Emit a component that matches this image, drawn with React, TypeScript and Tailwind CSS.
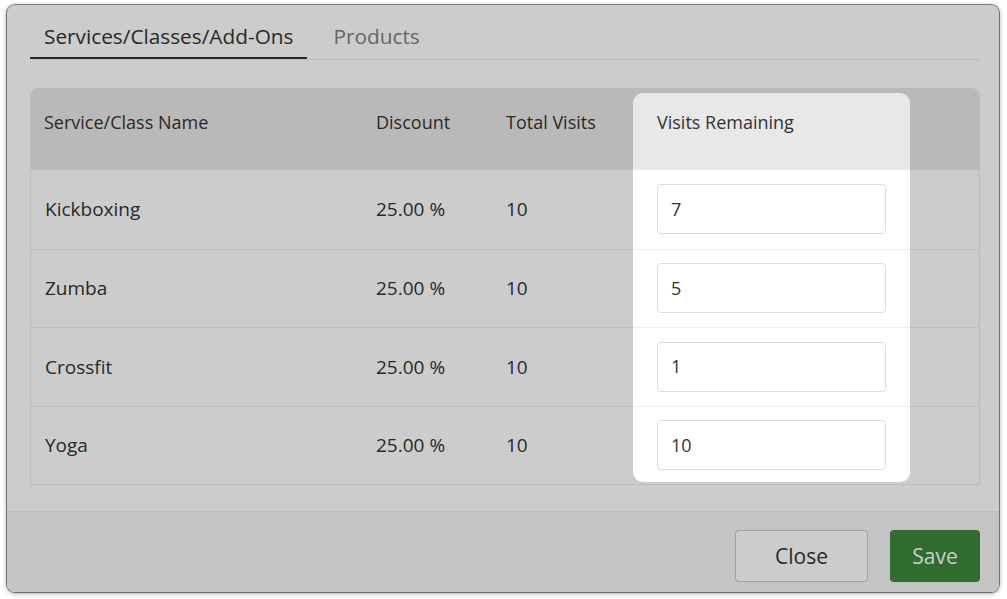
import React from "react";

const rows = [
  { name: "Kickboxing", discount: "25.00 %", total: "10", remaining: "7" },
  { name: "Zumba", discount: "25.00 %", total: "10", remaining: "5" },
  { name: "Crossfit", discount: "25.00 %", total: "10", remaining: "1" },
  { name: "Yoga", discount: "25.00 %", total: "10", remaining: "10" },
];

const cols = "grid grid-cols-[331px_130px_141px_277px_70px]";

export default function App() {
  return (
    <div
      className="w-[1007px] h-[599px] bg-white pt-[5px] pl-[7px]"
      style={{ fontFamily: "'Open Sans', Lato, sans-serif", fontVariantLigatures: "none" }}
    >
      <div className="relative w-[992px] h-[587px] bg-white rounded-[8px] overflow-hidden shadow-[0_0_0_1px_rgba(0,0,0,0.45),0_1px_5px_rgba(0,0,0,0.45)] flex flex-col">
        {/* Tabs */}
        <div className="pl-[23px] pr-[19px] pt-[19px]">
          <div className="flex border-b border-[#ececec]">
            <div className="px-[14px] pb-[9px] border-b-2 border-[#333] text-[20.8px] leading-[24px] text-[#333]">
              Services/Classes/Add-Ons
            </div>
            <div className="ml-[12px] px-[14px] pb-[9px] text-[20.8px] leading-[24px] text-[#808080]">
              Products
            </div>
          </div>
        </div>

        {/* Table */}
        <div className="pl-[23px] pr-[19px] pt-[28px]">
          <div className="relative w-[950px] rounded-t-[8px] border border-[#ececec] border-t-0">
            <div className={`${cols} h-[82px] bg-[#e8e8e8] rounded-t-[8px] text-[18px] text-[#333]`}>
              <div className="pl-[13px] pt-[21px]">Service/Class Name</div>
              <div className="pl-[14px] pt-[21px]">Discount</div>
              <div className="pl-[14px] pt-[21px]">Total Visits</div>
              <div className="pl-[24px] pt-[21px]">Visits Remaining</div>
              <div />
            </div>
            {rows.map((r, i) => (
              <div
                key={r.name}
                className={`${cols} h-[78.5px] items-center text-[19px] text-[#333] ${i > 0 ? "border-t border-[#eeeeee]" : ""}`}
              >
                <div className="pl-[14px]">{r.name}</div>
                <div className="pl-[14px]">{r.discount}</div>
                <div className="pl-[14px]">{r.total}</div>
                <div className="pl-[24px]">
                  <div className="w-[229px] h-[50px] bg-white border border-[#dddddd] rounded-[4px] flex items-center pl-[13px] text-[18px] text-[#333]">
                    {r.remaining}
                  </div>
                </div>
                <div />
              </div>
            ))}
            {/* spotlight */}
            <div className="absolute left-[602px] top-[5px] w-[277px] bottom-[2px] rounded-[10px] shadow-[0_0_0_2000px_rgba(0,0,0,0.2)] pointer-events-none" />
          </div>
        </div>

        {/* Footer */}
        <div className="mt-[26px] flex-1 bg-[#f6f6f6] border-t border-[#ebebeb] flex justify-end items-start gap-[22px] pt-[18px] pr-[19px]">
          <button className="w-[133px] h-[52px] bg-white border border-[#cccccc] rounded-[4px] text-[21px] text-[#333] leading-none">
            Close
          </button>
          <button className="w-[90px] h-[52px] bg-[#3d863c] rounded-[4px] text-[21px] text-white leading-none">
            Save
          </button>
        </div>
      </div>
    </div>
  );
}
